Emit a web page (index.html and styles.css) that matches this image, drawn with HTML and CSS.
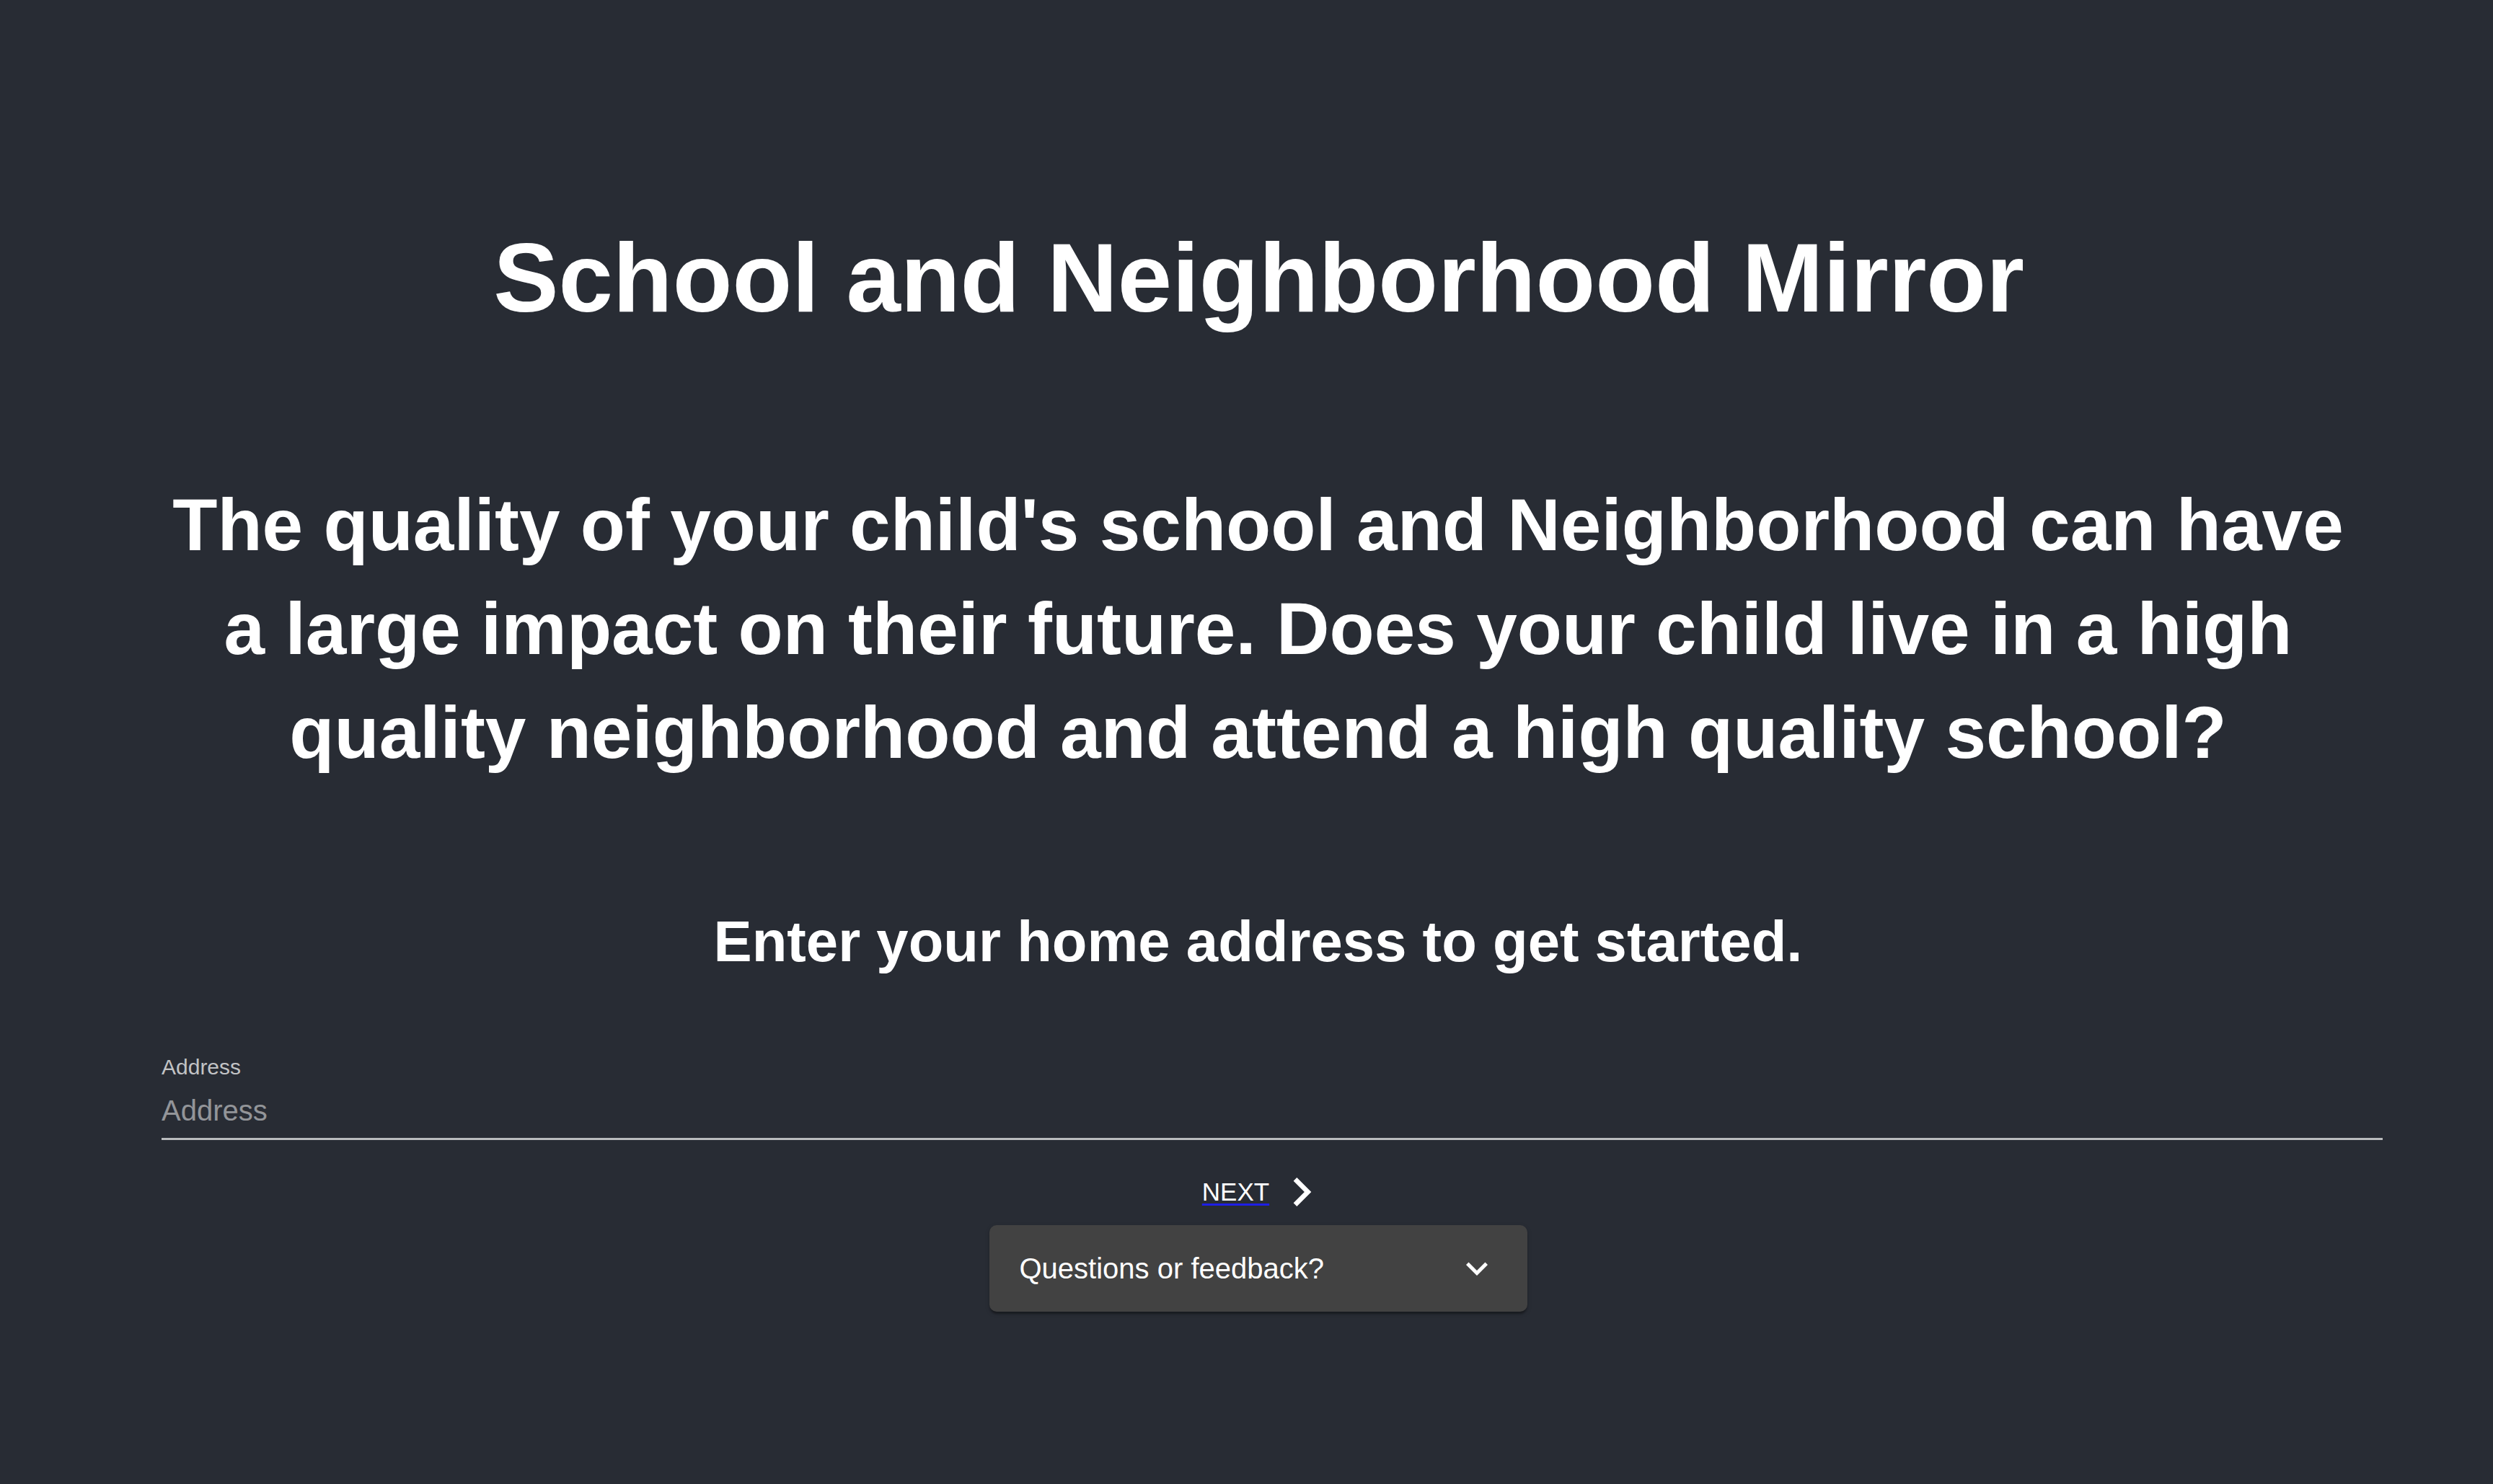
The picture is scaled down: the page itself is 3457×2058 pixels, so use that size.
FILE: index.html
```html
<!DOCTYPE html>
<html lang="en">
<head>
<meta charset="utf-8">
<title>School and Neighborhood Mirror</title>
<link rel="stylesheet" href="styles.css">
</head>
<body>
<main class="page">
  <h1 class="title">School and Neighborhood Mirror</h1>
  <p class="intro">The quality of your child's school and Neighborhood can have a large impact on their future. Does your child live in a high quality neighborhood and attend a high quality school?</p>
  <h2 class="prompt">Enter your home address to get started.</h2>
  <div class="field">
    <label class="field-label" for="address">Address</label>
    <div class="field-input-wrap">
      <input id="address" class="field-input" type="text" placeholder="Address">
    </div>
  </div>
  <div class="next-row">
    <a class="next-link" href="#"><span class="next-text">NEXT</span></a>
    <svg class="next-icon" viewBox="0 0 24 24" aria-hidden="true"><path d="M10 6 8.59 7.41 13.17 12l-4.58 4.59L10 18l6-6z"/></svg>
  </div>
  <div class="feedback-row">
    <div class="feedback">
      <span class="feedback-text">Questions or feedback?</span>
      <svg class="feedback-icon" viewBox="0 0 24 24" aria-hidden="true"><path d="M16.59 8.59 12 13.17 7.41 8.59 6 10l6 6 6-6z"/></svg>
    </div>
  </div>
</main>
</body>
</html>
```
FILE: styles.css
```css
html, body {
  margin: 0;
  padding: 0;
}
body {
  background: #282c34;
  color: #ffffff;
  font-family: "Liberation Sans", Arial, sans-serif;
  min-height: 2058px;
}
.page {
  padding: 304px 0 0 32px;
  text-align: center;
}
.title {
  margin: 0;
  padding-left: 2px;
  font-size: 135.5px;
  line-height: 162px;
  font-weight: 700;
}
.intro {
  margin: 190px auto 0;
  max-width: 3060px;
  font-size: 101.8px;
  line-height: 144px;
  font-weight: 700;
}
.prompt {
  margin: 170px 0 0;
  font-size: 79.7px;
  line-height: 96px;
  font-weight: 700;
}
.field {
  margin: 108px 153px 0 192px;
  text-align: left;
}
.field-label {
  display: block;
  font-size: 30px;
  line-height: 36px;
  color: rgba(255, 255, 255, 0.72);
}
.field-input-wrap {
  margin-top: 18px;
  padding-bottom: 14px;
  border-bottom: 3px solid rgba(255, 255, 255, 0.68);
}
.field-input {
  display: block;
  width: 100%;
  box-sizing: border-box;
  margin: 0;
  padding: 0;
  border: 0;
  outline: none;
  background: transparent;
  color: #ffffff;
  font-family: "Liberation Sans", Arial, sans-serif;
  font-size: 40px;
  line-height: 48px;
  height: 48px;
}
.field-input::placeholder {
  color: rgba(255, 255, 255, 0.5);
}
.next-row {
  margin-top: 32px;
  padding-left: 23px;
  height: 80px;
  display: flex;
  justify-content: center;
  align-items: center;
  gap: 5px;
}
.next-link {
  color: #1e1ee6;
  text-decoration: underline;
  text-decoration-color: #1e1ee6;
  text-decoration-thickness: 3px;
  text-underline-offset: 4px;
  font-size: 35px;
  line-height: 40px;
}
.next-text {
  color: #ffffff;
}
.next-icon {
  width: 80px;
  height: 80px;
  fill: #ffffff;
  display: block;
}
.feedback-row {
  margin-top: 6px;
  display: flex;
  justify-content: center;
}
.feedback {
  width: 746px;
  height: 120px;
  box-sizing: border-box;
  padding: 0 40px 0 42px;
  background: #424242;
  border-radius: 10px;
  display: flex;
  align-items: center;
  justify-content: space-between;
  box-shadow: 0 5px 2.5px -2.5px rgba(0, 0, 0, 0.2), 0 2.5px 2.5px 0 rgba(0, 0, 0, 0.14), 0 2.5px 7.5px 0 rgba(0, 0, 0, 0.12);
}
.feedback-text {
  font-size: 40px;
  line-height: 48px;
  color: #ffffff;
}
.feedback-icon {
  width: 60px;
  height: 60px;
  fill: #ffffff;
  display: block;
}
```
